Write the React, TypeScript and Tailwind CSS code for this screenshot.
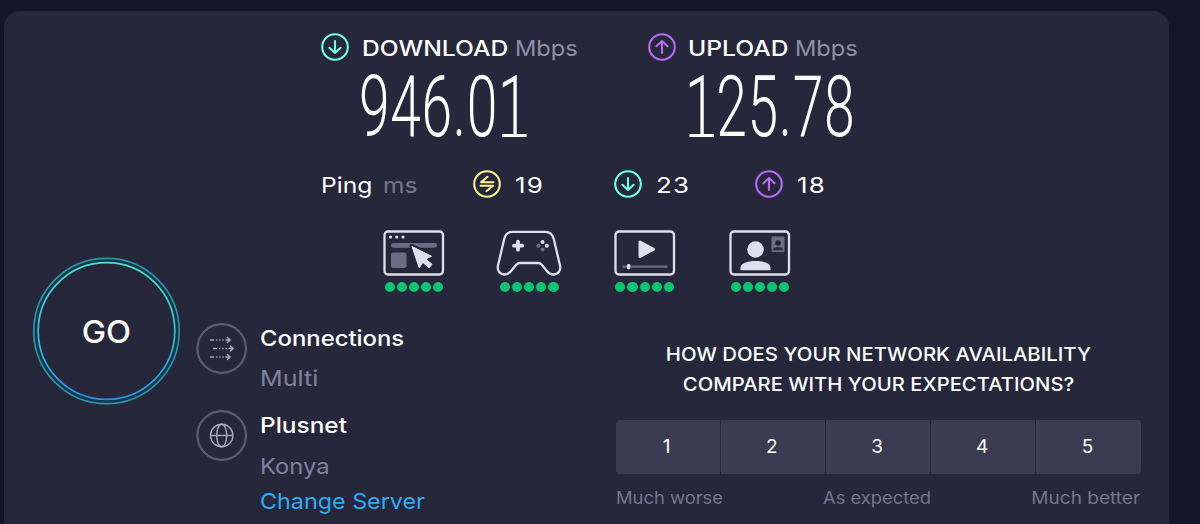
import type { ReactNode } from 'react';

type IconKind = 'down' | 'up' | 'swap';

const iconColors: Record<IconKind, string> = {
  down: '#6efff0',
  up: '#b869f8',
  swap: '#fff38e',
};

const iconPaths: Record<IconKind, string> = {
  down: 'M14 8v12M8.4 14.8L14 20l5.6-5.2',
  up: 'M14 20V8M8.4 13.2L14 8l5.6 5.2',
  swap: 'M14.6 6.8L8 12.2h12.4M13.4 21.2L20 15.8H7.6',
};

function RoundIcon({ kind }: { kind: IconKind }) {
  return (
    <svg className="h-7 w-7 shrink-0" viewBox="0 0 28 28" fill="none" stroke={iconColors[kind]} strokeWidth="2.1" strokeLinecap="round" strokeLinejoin="round">
      <circle cx="14" cy="14" r="12.8" />
      <path d={iconPaths[kind]} />
    </svg>
  );
}

function BrowserIcon() {
  return (
    <svg className="h-[46px] w-[62px]" viewBox="0 0 62 46">
      <rect x="1.5" y="1.5" width="58.5" height="43" rx="3.5" fill="none" stroke="#dfe0ee" strokeWidth="2.3" />
      <g fill="#dfe0ee">
        <circle cx="7.5" cy="7" r="1.6" />
        <circle cx="13.8" cy="7" r="1.6" />
        <circle cx="20" cy="7" r="1.6" />
      </g>
      <rect x="8" y="13" width="46" height="4.8" rx="2.4" fill="#6c6d83" />
      <rect x="8" y="22.5" width="15.5" height="15.5" rx="2" fill="#6c6d83" />
      <path d="M29 16.5L48.5 26.3l-6 2.6 6.5 5.4-3 3.6-6.2-5.6-3.6 5.5z" fill="#dfe0ee" stroke="#26273b" strokeWidth="5" paintOrder="stroke" strokeLinejoin="round" />
      <path d="M29 16.5L48.5 26.3l-6 2.6 6.5 5.4-3 3.6-6.2-5.6-3.6 5.5z" fill="#dfe0ee" stroke="#dfe0ee" strokeWidth="1" strokeLinejoin="round" />
    </svg>
  );
}

function GamepadIcon() {
  return (
    <svg className="h-[46px] w-[66px]" viewBox="0 0 66 46">
      <path
        d="M16.5 1.8H49.5C54 1.8 56.8 5 57.8 9L64 35.5C65.2 41 61.8 44.5 57.6 44.5C54.5 44.5 52.4 43 50.5 40.5L45.8 34.8C44.6 33.5 43.5 33 42 33H24C22.5 33 21.4 33.5 20.2 34.8L15.5 40.5C13.6 43 11.5 44.5 8.4 44.5C4.2 44.5 .8 41 2 35.5L8.2 9C9.2 5 12 1.8 16.5 1.8Z"
        fill="none"
        stroke="#dfe0ee"
        strokeWidth="2.3"
      />
      <path d="M22 11.7v8M18 15.7h8" stroke="#dfe0ee" strokeWidth="3.8" strokeLinecap="round" />
      <circle cx="46.5" cy="12" r="2" fill="#dfe0ee" />
      <circle cx="50.8" cy="15.7" r="2" fill="#dfe0ee" />
      <circle cx="42.4" cy="15.7" r="2" fill="#6c6d83" />
      <circle cx="46.5" cy="19.6" r="2" fill="#6c6d83" />
    </svg>
  );
}

function VideoIcon() {
  return (
    <svg className="h-[46px] w-[62px]" viewBox="0 0 62 46">
      <rect x="1.5" y="1.5" width="58.5" height="43" rx="3.5" fill="none" stroke="#dfe0ee" strokeWidth="2.3" />
      <path d="M26 12v14.5L39.5 19.3z" fill="#dfe0ee" stroke="#dfe0ee" strokeWidth="3" strokeLinejoin="round" />
      <path d="M8.5 36.6h45" stroke="#6c6d83" strokeWidth="2.4" />
      <rect x="13" y="34" width="3.2" height="5.2" rx="1" fill="#dfe0ee" />
    </svg>
  );
}

function CallIcon() {
  return (
    <svg className="h-[46px] w-[62px]" viewBox="0 0 62 46">
      <rect x="1.5" y="1.5" width="58.5" height="43" rx="3.5" fill="none" stroke="#dfe0ee" strokeWidth="2.3" />
      <circle cx="26.5" cy="19.5" r="8.3" fill="#dfe0ee" />
      <path d="M11.5 40.2v-2.4c0-4.5 7-6.8 15-6.8s15 2.3 15 6.8v2.4z" fill="#dfe0ee" />
      <rect x="42.5" y="6.5" width="13" height="15.5" rx="1" fill="#6c6d83" />
      <circle cx="49" cy="13" r="2.8" fill="#26273b" />
      <path d="M44 20.2c0-2.2 2-3.2 5-3.2s5 1 5 3.2z" fill="#26273b" />
    </svg>
  );
}

function Ratings() {
  return (
    <div className="mt-[6px] flex gap-[2px]">
      {[1, 2, 3, 4, 5].map((n) => (
        <span key={n} className="h-[10px] w-[10.1px] rounded-full bg-[#0cc574]" />
      ))}
    </div>
  );
}

function Service({ children }: { children: ReactNode }) {
  return (
    <div className="flex w-[115.3px] flex-col items-center">
      {children}
      <Ratings />
    </div>
  );
}

// narrow, light digits; the figure one stands on a foot
function SpeedValue({ value }: { value: string }) {
  return (
    <div className="mt-[14px] mb-[11px] h-16 origin-left scale-x-[0.642] font-[Roboto] text-[86px] leading-[64px] font-light tracking-[1px] whitespace-nowrap">
      {value.split('').map((char, i) => (
        <span
          key={i}
          className={char === '1' ? 'relative after:absolute after:bottom-[20px] after:left-[7px] after:h-[3px] after:w-[38px] after:bg-white' : ''}
        >
          {char}
        </span>
      ))}
    </div>
  );
}

function Ping({ kind, value }: { kind: IconKind; value: number }) {
  return (
    <div className="flex w-[141px] items-center">
      <RoundIcon kind={kind} />
      <span className="relative top-px ml-[14px] origin-left scale-x-[1.18] text-[22px] leading-7 tracking-[1px]">{value}</span>
    </div>
  );
}

const choices = [1, 2, 3, 4, 5];

export default function App() {
  return (
    <div className="h-[524px] w-[1200px] overflow-hidden bg-[#141526] pt-[11px] pl-1 font-['Inter','Noto_Sans',sans-serif] text-white">
      <main className="h-[530px] w-[1165px] rounded-[16px] bg-[#26273b] pt-[22px]">
        {/* speed results */}
        <div className="flex pl-[317px]">
          <div className="w-[327px]">
            <div className="flex h-7 items-center">
              <RoundIcon kind="down" />
              <span className="ml-[13px] w-[152.5px] shrink-0 pt-[2px] text-[22px] leading-7 font-medium whitespace-nowrap"><span className="inline-block origin-left scale-x-[1.12]">DOWNLOAD</span></span>
              <span className="origin-left scale-x-[1.075] pt-[2px] text-[22px] leading-7 text-[#8f90aa]">Mbps</span>
            </div>
            <div className="ml-[38px]"><SpeedValue value="946.01" /></div>
          </div>
          <div className="w-[327px]">
            <div className="flex h-7 items-center">
              <RoundIcon kind="up" />
              <span className="ml-3 w-[107px] shrink-0 pt-[2px] text-[22px] leading-7 font-medium whitespace-nowrap"><span className="inline-block origin-left scale-x-[1.12]">UPLOAD</span></span>
              <span className="origin-left scale-x-[1.075] pt-[2px] text-[22px] leading-7 text-[#8f90aa]">Mbps</span>
            </div>
            <div className="ml-[37px]"><SpeedValue value="125.78" /></div>
          </div>
        </div>

        {/* ping */}
        <div className="mt-5 flex h-7 items-center pl-[316.5px] text-[22px] leading-7">
          <div className="flex w-[152px] pt-[2px]">
            <span className="w-[62px]"><span className="inline-block origin-left scale-x-[1.12]">Ping</span></span>
            <span className="origin-left scale-x-[1.11] text-[#74758e]">ms</span>
          </div>
          <Ping kind="swap" value={19} />
          <Ping kind="down" value={23} />
          <Ping kind="up" value={18} />
        </div>

        <div className="mt-[32px] flex pl-[352.4px]">
          <Service><BrowserIcon /></Service>
          <Service><GamepadIcon /></Service>
          <Service><VideoIcon /></Service>
          <Service><CallIcon /></Service>
        </div>

        <div className="flex">
          <button className="-mt-[35px] ml-[29px] grid h-[148px] w-[148px] shrink-0 place-items-center">
            <svg className="col-start-1 row-start-1 h-[148px] w-[148px]" viewBox="0 0 148 148" fill="none">
              <defs>
                <linearGradient id="ring" x1="0" y1="0" x2="0" y2="1">
                  <stop offset="0" stopColor="#4ce5bd" />
                  <stop offset="0.5" stopColor="#35c4d3" />
                  <stop offset="1" stopColor="#2c91df" />
                </linearGradient>
              </defs>
              <circle cx="73.5" cy="74" r="70.3" stroke="#123350" strokeWidth="4" />
              <circle cx="73.5" cy="74" r="72.7" stroke="#2e929f" strokeWidth="1.7" />
              <circle cx="73.5" cy="74" r="68.3" stroke="url(#ring)" strokeWidth="1.7" />
            </svg>
            <span className="col-start-1 row-start-1 scale-x-[1.05] pr-[2px] text-[31px] leading-none font-medium">GO</span>
          </button>

          <div className="ml-[15px] w-[419.5px] pt-[30px]">
            <div className="flex h-[87px]">
              <svg className="h-[52px] w-[52px] shrink-0" viewBox="0 0 52 52" fill="none">
                <circle cx="25.7" cy="26.5" r="24.3" stroke="#5a5b70" strokeWidth="2.2" />
                <g stroke="#a9aabd" strokeWidth="1.4" strokeLinecap="round" strokeLinejoin="round">
                  <path d="M14.5 18h3M20.5 18h.3M23.8 18h.3M27 18h.3M30 18h4M31.4 15.4l2.8 2.6-2.8 2.6" />
                  <path d="M17.5 26.5h3M23.5 26.5h.3M26.8 26.5h.3M30 26.5h.3M33 26.5h4M34.4 23.9l2.8 2.6-2.8 2.6" />
                  <path d="M14.5 35h3M20.5 35h.3M23.8 35h.3M27 35h.3M30 35h4M31.4 32.4l2.8 2.6-2.8 2.6" />
                </g>
              </svg>
              <div className="ml-[12px] pt-px text-[22px]">
                <div className="origin-left scale-x-[1.085] leading-[30px] font-medium">Connections</div>
                <div className="mt-[10px] origin-left scale-x-[1.14] leading-[30px] text-[#8081a0]">Multi</div>
              </div>
            </div>
            <div className="flex">
              <svg className="h-[52px] w-[52px] shrink-0" viewBox="0 0 52 52" fill="none">
                <circle cx="25.7" cy="26.5" r="24.3" stroke="#5a5b70" strokeWidth="2.2" />
                <g stroke="#a9aabd" strokeWidth="1.4">
                  <circle cx="25.7" cy="26.5" r="11.2" />
                  <ellipse cx="25.7" cy="26.5" rx="5" ry="11.2" />
                  <path d="M14.5 26.5h22.4" />
                </g>
              </svg>
              <div className="ml-[12px] pt-px text-[22px]">
                <div className="origin-left scale-x-[1.11] leading-[30px] font-medium">Plusnet</div>
                <div className="mt-[11px] origin-left scale-x-[1.08] leading-[30px] text-[#8081a0]">Konya</div>
                <div className="mt-[5px] origin-left scale-x-[1.06] leading-[30px] text-[#2baef5]">Change Server</div>
              </div>
            </div>
          </div>

          {/* survey */}
          <div className="w-[525px] pt-[47px]">
            <div className="text-center text-[18.5px] leading-[30px] font-medium whitespace-nowrap">
              <div className="scale-x-[1.1]">HOW DOES YOUR NETWORK AVAILABILITY</div>
              <div className="scale-x-[1.095]">COMPARE WITH YOUR EXPECTATIONS?</div>
            </div>
            <div className="mt-[21px] flex h-[54px] gap-px overflow-hidden rounded">
              {choices.map((n) => (
                <button key={n} className="flex-1 bg-[#3b3c51] pr-[2px] text-[19px]">{n}</button>
              ))}
            </div>
            <div className="mt-[11px] flex justify-between text-[17px] leading-[26px] text-[#74758e]">
              <span className="origin-left scale-x-[1.08]">Much worse</span>
              <span className="relative -left-[2px] scale-x-[1.08]">As expected</span>
              <span className="origin-right scale-x-[1.12]">Much better</span>
            </div>
          </div>
        </div>
      </main>
    </div>
  );
}
